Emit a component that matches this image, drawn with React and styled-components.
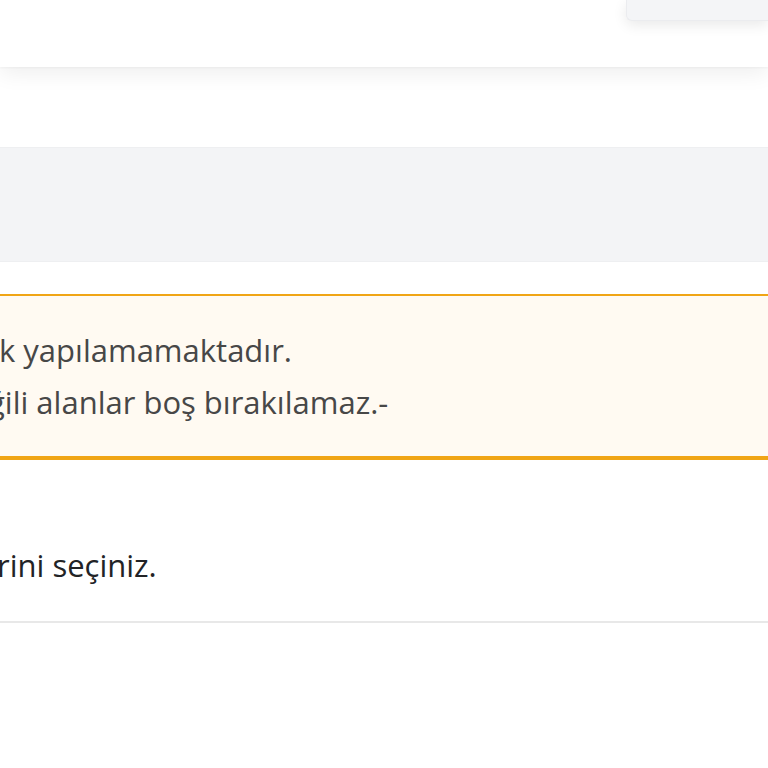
import React from "react";
import styled, { createGlobalStyle } from "styled-components";

const Global = createGlobalStyle`
  html, body { margin: 0; padding: 0; background: #ffffff; }
  body { overflow: hidden; font-family: "Open Sans", "Noto Sans", sans-serif; }
`;

const Page = styled.div`
  width: 768px;
  height: 768px;
  overflow: hidden;
  display: flex;
  flex-direction: column;
  background: #ffffff;
`;

const Header = styled.header`
  height: 67px;
  flex: none;
  display: flex;
  justify-content: flex-end;
  align-items: flex-start;
  background: #ffffff;
  box-shadow: 0 6px 22px rgba(0, 0, 0, 0.07), 0 1px 2px rgba(0, 0, 0, 0.04);
  position: relative;
  z-index: 2;
`;

const UserCard = styled.div`
  width: 142px;
  height: 21px;
  box-sizing: border-box;
  background: #f4f5f7;
  border: 1px solid #ebecef;
  border-top: none;
  border-right: none;
  border-bottom-left-radius: 6px;
  box-shadow: 0 4px 14px rgba(0, 0, 0, 0.09);
`;

const Band = styled.section`
  margin-top: 80px;
  height: 115px;
  flex: none;
  box-sizing: border-box;
  background: #f3f4f6;
  border-top: 1px solid #eeeff1;
  border-bottom: 1px solid #eeeff1;
`;

const Alert = styled.div`
  margin-top: 32px;
  flex: none;
  background: #fffaf2;
  border-top: 2px solid #f0a515;
  border-bottom: 4px solid #f0a515;
  padding: 28px 0 28px;
  overflow: hidden;
`;

const AlertLine = styled.p`
  margin: 0;
  font-size: 31px;
  line-height: 52px;
  color: #474747;
  white-space: nowrap;
  text-indent: ${(p) => p.$indent || 0}px;
`;

const Prompt = styled.p`
  margin: 85px 0 0;
  font-size: 31px;
  line-height: 40px;
  color: #222326;
  white-space: nowrap;
  text-indent: ${(p) => p.$indent || 0}px;
  padding-bottom: 36px;
  border-bottom: 2px solid #e8e8e8;
`;

export default function App() {
  return (
    <>
      <Global />
      <Page>
        <Header>
          <UserCard />
        </Header>
        <Band />
        <Alert>
          <AlertLine $indent={-1}>k yapılamamaktadır.</AlertLine>
          <AlertLine $indent={-12}>ğili alanlar boş bırakılamaz.-</AlertLine>
        </Alert>
        <Prompt $indent={-3}>rini seçiniz.</Prompt>
      </Page>
    </>
  );
}
